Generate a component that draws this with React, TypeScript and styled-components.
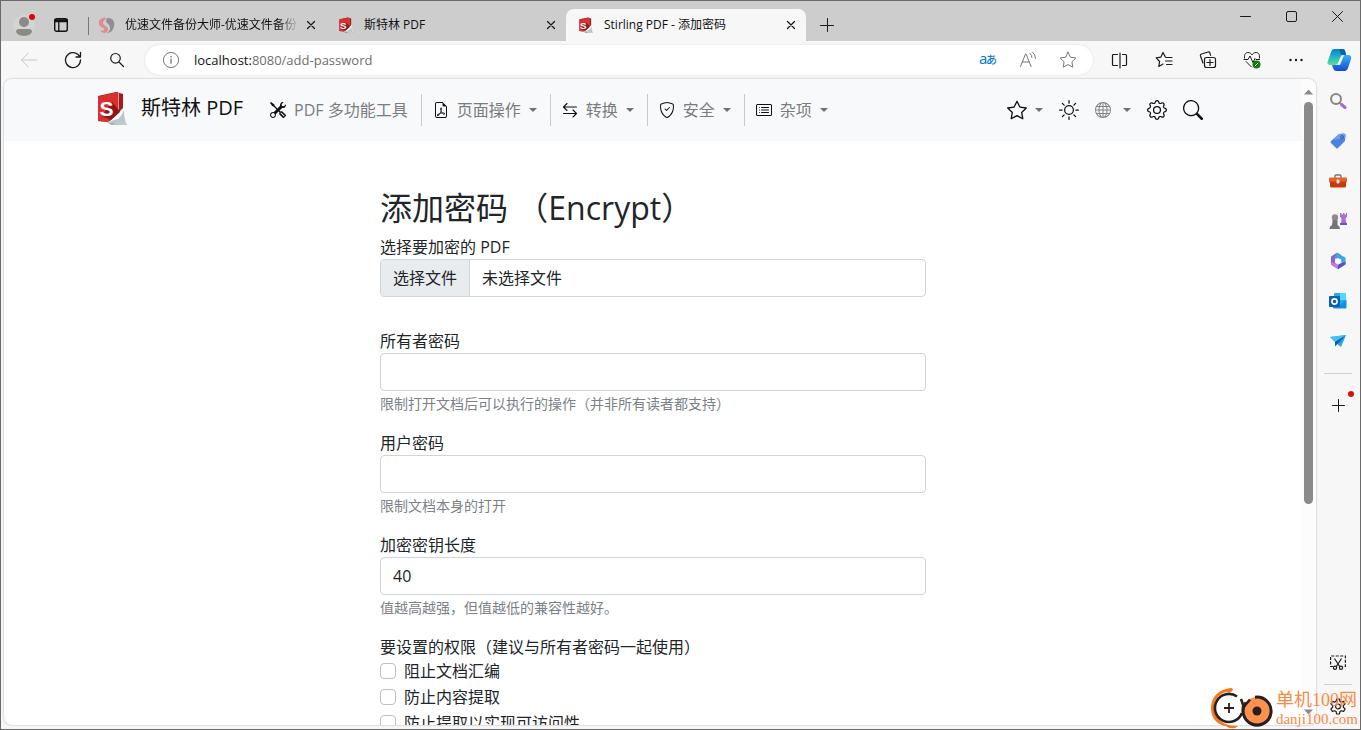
import React from "react";
import styled, { createGlobalStyle } from "styled-components";
import {
  BsTools,
  BsFileEarmarkPdf,
  BsShieldCheck,
  BsCardList,
  BsStar,
  BsSun,
  BsGlobe,
  BsGear,
  BsSearch,
} from "react-icons/bs";

const GlobalStyle = createGlobalStyle`
  *, *::before, *::after { box-sizing: border-box; }
  body {
    margin: 0;
    overflow: hidden;
    font-family: "Open Sans", "Noto Sans CJK SC", sans-serif;
    font-size: 16px;
    line-height: 24px;
    color: #212529;
  }
  button, input { font: inherit; color: inherit; }
  button { padding: 0; border: 0; background: none; }
  svg { display: block; flex: none; }
`;

/* ---------- browser window ---------- */

const Window = styled.div`
  position: relative;
  display: flex;
  flex-direction: column;
  height: 100vh;
  border: 1px solid #6a6a6a;
  background: #f7f7f7;
`;

const TitleBar = styled.header`
  display: flex;
  flex: none;
  height: 40px;
  background: #cdcdcd;
  color: #111;
`;

const ProfileArea = styled.div`
  display: flex;
  align-items: center;
  width: 85px;
  padding: 8px 0 0 11px;
  gap: 17px;
`;

const IconButton = styled.button<{ $w?: number; $h?: number; $color?: string }>`
  display: flex;
  flex: none;
  align-items: center;
  justify-content: center;
  width: ${(p) => p.$w ?? 44}px;
  height: ${(p) => p.$h ?? 38}px;
  color: ${(p) => p.$color ?? "#1b1b1b"};
`;

const Tabs = styled.div`
  display: flex;
  align-items: flex-end;
`;

const Tab = styled.div<{ $active?: boolean }>`
  position: relative;
  display: flex;
  align-items: center;
  width: 240px;
  height: 32px;
  padding: 0 3px 0 12px;
  border-radius: 8px 8px 0 0;
  background: ${(p) => (p.$active ? "#f7f7f7" : "transparent")};
  &:first-child::before {
    content: "";
    position: absolute;
    left: 2px;
    top: 8px;
    width: 1px;
    height: 18px;
    background: #777;
  }
`;

const TabTitle = styled.span<{ $fade?: boolean }>`
  flex: 1;
  min-width: 0;
  margin-left: 10px;
  overflow: hidden;
  white-space: nowrap;
  font-size: 12px;
  line-height: 16px;
  mask-image: ${(p) => (p.$fade ? "linear-gradient(90deg, #000 88%, transparent)" : "none")};
`;

const WindowControls = styled.div`
  display: flex;
  margin-left: auto;
`;

const Toolbar = styled.div`
  display: flex;
  flex: none;
  align-items: center;
  height: 38px;
  padding-left: 6px;
`;

const AddressBar = styled.div`
  display: flex;
  flex: 1;
  align-items: center;
  height: 30px;
  margin: 0 5px 0 6px;
  padding: 0 5px 0 17px;
  border-radius: 15px;
  background: #fff;
  box-shadow: 0 0 2px rgba(0, 0, 0, 0.14);
`;

const Url = styled.a`
  flex: 1;
  margin-left: 14px;
  font-size: 13px;
  line-height: 20px;
  color: #6e6e6e;
  text-decoration: none;
  b {
    font-weight: 400;
    color: #111;
  }
`;

const Body = styled.div`
  display: flex;
  flex: 1;
  min-height: 0;
`;

const Page = styled.div`
  display: flex;
  flex: 1;
  min-width: 0;
  margin: 0 0 4px 3px;
  overflow: hidden;
  border-radius: 8px;
  background: #fff;
  box-shadow: 0 0 2px rgba(0, 0, 0, 0.35);
`;

const Document = styled.div`
  flex: 1;
  min-width: 0;
  overflow: hidden;
`;

const ScrollBar = styled.div`
  display: flex;
  flex: none;
  flex-direction: column;
  align-items: center;
  justify-content: space-between;
  width: 14px;
  padding: 10px 2px 10px 0;
  background: #fcfcfc;
  color: #8a8a8a;
`;

const ScrollTrack = styled.div`
  flex: 1;
  margin: 7px 0;
  width: 9px;
`;

const ScrollThumb = styled.div`
  height: 67%;
  border-radius: 5px;
  background: #8a8a8a;
`;

const SideBar = styled.aside`
  display: flex;
  flex: none;
  flex-direction: column;
  align-items: center;
  width: 44px;
  padding: 2px 0;
`;

const SideRule = styled.hr<{ $tight?: boolean }>`
  width: 28px;
  height: 1px;
  margin: ${(p) => (p.$tight ? "2px 0" : "12px 0 11px")};
  border: 0;
  background: #cfcfcf;
`;

const Spacer = styled.div`
  flex: 1;
`;

const PlusButton = styled(IconButton)`
  position: relative;
  &::after {
    content: "";
    position: absolute;
    top: 6px;
    right: 6px;
    width: 6px;
    height: 6px;
    border-radius: 50%;
    background: #e00b0b;
  }
`;

/* ---------- web page ---------- */

const NavBar = styled.nav`
  height: 62px;
  background: #f8f9fa;
`;

const NavInner = styled.div`
  display: flex;
  align-items: center;
  max-width: 1140px;
  height: 62px;
  margin: 0 auto;
  padding: 0 20px 0 12px;
`;

const Brand = styled.a`
  display: flex;
  align-items: center;
  gap: 12px;
  margin-right: 27px;
  padding-bottom: 4px;
  font-size: 20px;
  line-height: 30px;
  color: #111;
  text-decoration: none;
  white-space: nowrap;
`;

const NavItem = styled.button<{ $divided?: boolean }>`
  display: flex;
  align-items: center;
  height: 32px;
  padding: 0 13px 0 ${(p) => (p.$divided ? 11 : 0)}px;
  border-left: ${(p) => (p.$divided ? "1px solid #c8c9ca" : "0")};
  color: #7b7c7d;
  white-space: nowrap;
  span {
    margin-left: 8px;
  }
  svg {
    color: #111;
  }
`;

const Caret = styled.i`
  flex: none;
  margin-left: 8px;
  border: 4px solid transparent;
  border-top: 4px solid #6f7072;
  border-bottom: 0;
`;

const NavTools = styled.div`
  display: flex;
  align-items: center;
  gap: 16px;
  margin-left: auto;
`;

const ToolButton = styled.button<{ $muted?: boolean }>`
  display: flex;
  align-items: center;
  color: ${(p) => (p.$muted ? "#808182" : "#111")};
`;

const Form = styled.form`
  max-width: 570px;
  margin: 0 auto;
  padding: 48px 12px 0;
`;

const Heading = styled.h2`
  margin: 0 0 8px;
  font-size: 32px;
  line-height: 38px;
  font-weight: 400;
`;

const Field = styled.div<{ $gap?: number }>`
  margin-bottom: ${(p) => p.$gap ?? 14}px;
`;

const Label = styled.label`
  display: block;
`;

const TextInput = styled.input`
  display: block;
  width: 100%;
  height: 38px;
  padding: 6px 12px;
  border: 1px solid #ced4da;
  border-radius: 4px;
  background: #fff;
`;

const Help = styled.small`
  display: block;
  font-size: 14px;
  line-height: 26px;
  color: #7b8187;
`;

const FileBox = styled.label`
  display: flex;
  height: 38px;
  overflow: hidden;
  border: 1px solid #ced4da;
  border-radius: 4px;
  line-height: 36px;
  span:first-of-type {
    padding: 0 12px;
    border-right: 1px solid #ced4da;
    background: #e9ecef;
  }
  span:last-of-type {
    padding: 0 12px;
  }
`;

const HiddenFile = styled.input`
  width: 0;
  height: 36px;
  opacity: 0;
`;

const CheckRow = styled.label`
  display: flex;
  align-items: center;
  height: 24px;
  margin-bottom: 2px;
`;

const CheckBox = styled.input`
  appearance: none;
  width: 16px;
  height: 16px;
  margin: 0 8px 0 0;
  border: 1px solid #bfbfbf;
  border-radius: 4px;
  background: #fff;
`;

const WaterMark = styled.div`
  position: absolute;
  right: 2px;
  bottom: 0;
  display: flex;
  align-items: center;
  gap: 2px;
  font-family: "Liberation Serif", "Noto Sans CJK SC", serif;
  color: #f98a45;
  pointer-events: none;
`;

const MarkText = styled.div`
  display: flex;
  flex-direction: column;
  padding-top: 2px;
  font-size: 18px;
  line-height: 20px;
  white-space: nowrap;
  span:last-child {
    font-size: 15px;
    line-height: 18px;
  }
`;

/* ---------- drawings ---------- */

type LineProps = { size: number; d: string; box?: number; w?: number };
const Line = ({ size, d, box = size, w = 1 }: LineProps) => (
  <svg width={size} height={size} viewBox={`0 0 ${box} ${box}`} fill="none" stroke="currentColor" strokeWidth={w} strokeLinecap="round" strokeLinejoin="round">
    <path d={d} />
  </svg>
);

const CLOSE = "M1.5 1.5l7 7M8.5 1.5l-7 7";
const STAR = "M9 1.2l2.4 5 5.4.8-3.9 3.8.9 5.4L9 13.6l-4.8 2.6.9-5.4L1.2 7l5.4-.8z";
const GEAR =
  "M7.6 1h2.8l.5 2.3 1.5.8 2.2-.7 1.5 2.5-1.8 1.6v1.8l1.8 1.6-1.5 2.6-2.2-.8-1.5.9-.5 2.4H7.6l-.5-2.4-1.5-.9-2.2.8-1.5-2.6 1.8-1.6V7.5L1.9 5.9l1.5-2.5 2.2.7 1.5-.8zM9 6a2.4 2.4 0 1 1 0 4.8A2.4 2.4 0 0 1 9 6";

const Logo = ({ size }: { size: number }) => (
  <svg width={size} height={size} viewBox="0 0 34 34">
    <path d="M12 31l20 1.500v.9l-16 .4z" fill="#7d9396" opacity=".8" />
    <path d="M3 5L21 1l7 2v14L14 31 3 30z" fill="#a01c22" />
    <path d="M3 5.500L23 1v17L13 31l-10-1z" fill="#d8302f" />
    <path d="M17 11l6 7 2 3-9 8-9-4z" fill="#8d151b" />
    <path d="M23 1l1 1v16l-1 1z" fill="#f08b86" />
    <path d="M29.500 14c-1 8-6 13-17 17l8 1.500c5 .7 8 .5 11 0-2-5-2-12-2-18.500z" fill="#eef3f3" />
    <path d="M29 19c-3 6-8 10-16 12l7 1.500c5 .7 8 .5 11 0-1.500-4-2-9-2-13.500z" fill="#b9c9cb" />
    <path d="M29 17c-3 5-6 8-12 12l6-1c3-3 5-6 6-11z" fill="#fff" />
    <text x="4.500" y="25" fontFamily="Liberation Sans" fontWeight="700" fontSize="21" fill="#fff">S</text>
  </svg>
);

const SwirlIcon = () => (
  <svg width="17" height="17" viewBox="0 0 17 17">
    <path d="M9 1C4 0 0 3 1 7c0 3 4 3 5 5 0 2-2 2-4 1 2 4 7 4 8 0 1-4-5-4-5-7 0-2 2-4 4-5z" fill="#df8c90" />
    <path d="M10 1c5 0 7 4 6 8-1 5-4 7-7 7 3-2 4-5 2-8-1-2-3-2-3-4 0-1 1-3 2-3z" fill="#8f8f8f" />
  </svg>
);

const Avatar = () => (
  <svg width="24" height="26" viewBox="0 0 24 26">
    <circle cx="12" cy="14" r="11" fill="#d6d4d1" />
    <circle cx="12" cy="10" r="5" fill="#8c8a87" />
    <path d="M4 20q0-3 3-3h10q3 0 3 3-2 4-8 4t-8-4z" fill="#8c8a87" />
    <circle cx="20" cy="5" r="3" fill="#e3000f" />
  </svg>
);

const TabMenuIcon = () => (
  <svg width="16" height="16" viewBox="0 0 16 16" fill="none" stroke="#111" strokeWidth="1.4">
    <rect x="1.7" y="1.7" width="12.6" height="12.6" rx="2" />
    <path d="M2 3.7h12M5.8 5v9" strokeWidth="1.3" />
    <path d="M2 3h12v1.6H2z" fill="#111" />
  </svg>
);

const CopilotIcon = () => (
  <svg width="25" height="24" viewBox="0 0 25 24">
    <defs>
      <linearGradient id="cpA" x1="0" y1="0" x2="0" y2="1">
        <stop offset="0" stopColor="#0f7fc0" />
        <stop offset=".5" stopColor="#1fb5cf" />
        <stop offset="1" stopColor="#62dd8c" />
      </linearGradient>
      <linearGradient id="cpB" x1="0" y1="0" x2="0" y2="1">
        <stop offset="0" stopColor="#33b5f5" />
        <stop offset="1" stopColor="#1747d8" />
      </linearGradient>
    </defs>
    <path d="M18 7h3q4 0 3 4l-3 9q-1 3-3 3H9q-2 0-3-3l-1-3h5q2 0 3-3l2-5q1-2 3-2z" fill="url(#cpB)" />
    <path d="M7 1h9q2 0 2.500 3l.5 3h-3q-2 0-3 3l-2 5q-1 2-3 2H3q-3 0-2.500-3L4 4q1-3 3-3z" fill="url(#cpA)" />
    <path d="M14 9q1-2 3-2l-4 10h-3q1.500-.5 2-2z" fill="#f7f7f7" />
    <path d="M12 1h4q2 0 3 6h-4q-2-1-2-4z" fill="#0b63ad" />
  </svg>
);

const ReadAloudIcon = () => (
  <svg width="18" height="18" viewBox="0 0 18 18" fill="none" stroke="#777" strokeLinecap="round" strokeLinejoin="round">
    <path d="M1.500 15.500L6.500 3h.6l5 12.500M3.500 11h6.800M11 2.500q2 1.500 2 4M13.500 1q3 2.500 3 6.500" />
  </svg>
);

const TranslateIcon = () => (
  <svg width="20" height="20" viewBox="0 0 20 20" fill="#0f78cf">
    <text x="1" y="14" fontFamily="Noto Sans" fontSize="15">a</text>
    <text x="8" y="14" fontFamily="Noto Sans CJK JP" fontWeight="500" fontSize="11">あ</text>
  </svg>
);

const InfoIcon = () => (
  <svg width="18" height="18" viewBox="0 0 18 18" fill="none" stroke="#777">
    <circle cx="9" cy="9" r="7.600" />
    <path d="M9 7.800v5M9 5v1.400" strokeWidth="1.300" />
  </svg>
);

const HealthIcon = () => (
  <svg width="18" height="18" viewBox="0 0 18 18" fill="none" stroke="#1b1b1b" strokeLinecap="round" strokeLinejoin="round">
    <path d="M1.500 7C1 3 3 1.500 5 1.500S8.500 3 9 4c.5-1 2-2.500 4-2.500S17 3 16.500 7M3 10.500L8.500 16M1 8.500h4L7 5l3 6.500 2-4 1 1h3.500" />
    <circle cx="13.500" cy="13.500" r="4" fill="#107c10" stroke="none" />
    <path d="M12.200 14.800l2.600-2.600" stroke="#fff" />
  </svg>
);

const ConvertIcon = () => <Line size={16} w={1.1} d="M14.500 5H1.500M5 1.500L1.500 5 5 8.500M1.500 11.500h13M11 8l3.500 3.500L11 15" />;

const SideSearch = () => (
  <svg width="18" height="18" viewBox="0 0 18 18" fill="none">
    <circle cx="7" cy="7" r="5" stroke="#858585" strokeWidth="2" />
    <path d="M11 11l1.500 1.500" stroke="#858585" strokeWidth="2" />
    <path d="M12.500 12.500l3.500 3" stroke="#a569d4" strokeWidth="3" strokeLinecap="round" />
  </svg>
);

const SideTag = () => (
  <svg width="18" height="18" viewBox="0 0 18 18">
    <path d="M10 2l5-.5q1.500 0 1.500 1.500L16 9 9 16q-1 1-2 0L2 11q-1-1 0-2z" fill="#4a83e0" />
    <path d="M10 2l5-.5q1.500 0 1.500 1.500l-.3 3L4 8z" fill="#6ba0ee" />
    <circle cx="13" cy="5" r="1.700" fill="#1d3b86" />
    <circle cx="13" cy="5" r=".7" fill="#dfe9ff" />
  </svg>
);

const SideTools = () => (
  <svg width="18" height="18" viewBox="0 0 18 18">
    <path d="M6 6V4q0-1 1-1h4q1 0 1 1v2" fill="none" stroke="#777" strokeWidth="1.400" />
    <rect x="0" y="5.500" width="18" height="5" rx="1" fill="#e8622a" />
    <path d="M1 9.500h16V14q0 1.500-1.500 1.500h-13Q1 15.500 1 14z" fill="#c43b0e" />
    <rect x="7.500" y="7.500" width="3" height="4" rx="1" fill="#ddd" />
  </svg>
);

const SideGames = () => (
  <svg width="18" height="18" viewBox="0 0 18 18">
    <path d="M11 1h1.500v1.500H14V1h1.500v1.500H17V1h1v4l-1.500 1 .8 6H12l.5-6L11 5z" fill="#a76fd6" />
    <path d="M11 11h7v2h-7z" fill="#7f4ab8" />
    <circle cx="6" cy="5.500" r="3.200" fill="#8d8d8d" />
    <path d="M3.500 8h5v1.500L8.500 13q2.500 1 2.500 4H.5q0-3 2.500-4l.5-3.500z" fill="#757575" />
  </svg>
);

const SideOffice = () => (
  <svg width="18" height="18" viewBox="0 0 18 18">
    <path d="M8 .8L2 4.500v8l4 2.300V6.500L12 3z" fill="#8c5fd6" />
    <path d="M8 .8l8.500 5v6.700l-4.300-2.300V7.500L6 6.500V5z" fill="#3aa5e0" />
    <path d="M2 11.500l7 5.700 7.500-4.700v-2.500L12 11l-3 1.800-3-2z" fill="#5a4fbf" />
    <path d="M1.500 10l5 1 2.500 2v4.200l-6.500-4z" fill="#c17ce0" />
    <path d="M9 6l3 1.500v3.200L9 12.500l-3-1.800V7.500z" fill="#f7f7f7" />
  </svg>
);

const SideOutlook = () => (
  <svg width="18" height="18" viewBox="0 0 18 18">
    <rect x="5" y="1" width="12" height="14" rx="1" fill="#28a8ea" />
    <path d="M11 1h5q1 0 1 1v6h-6z" fill="#50d9ff" />
    <path d="M4 16V9l7 4 6.500-5v7.500q0 1-1 1H5z" fill="#1490df" />
    <rect x="0" y="4" width="11" height="11" rx="1" fill="#0a5fb4" />
    <circle cx="5.500" cy="9.500" r="2.600" fill="none" stroke="#fff" strokeWidth="1.600" />
  </svg>
);

const SideSend = () => (
  <svg width="18" height="18" viewBox="0 0 18 18">
    <path d="M1 5l16-2-5 12-5-4z" fill="#2aa5e2" />
    <path d="M17 3L6 10v4.500l2.500-2.500z" fill="#0b5fa5" />
    <path d="M1 5l16-2L6 9.500z" fill="#45c0f0" />
  </svg>
);

const CaptureIcon = () => (
  <svg width="18" height="18" viewBox="0 0 18 18" fill="none" stroke="#1b1b1b" strokeWidth="1.200">
    <path d="M4 13.500H1.600V3h14.800v10.500H14" strokeDasharray="3 1.500" />
    <path d="M5.500 5.500L11 14M12.500 5.500L7 14" />
    <circle cx="6" cy="14.800" r="1.600" />
    <circle cx="12" cy="14.800" r="1.600" />
  </svg>
);

const MarkLogo = () => (
  <svg width="64" height="42" viewBox="0 0 64 42" fill="none">
    <path d="M21 1C9 2 1 10 1 21s7 17 15 18q3 3 9 2l3-2C14 39 5 33 4 21 4 12 10 6 17 5q4 1 6-2 0-2-2-2z" fill="#f5781e" />
    <circle cx="19" cy="21" r="14" fill="#fff" />
    <path d="M27 9.500A14 14 0 1 0 32 26M33 19v6" stroke="#272020" strokeWidth="2.600" />
    <path d="M14 21h10M19 16v10" stroke="#272020" strokeWidth="1.800" />
    <circle cx="47" cy="24" r="14" fill="#fd904e" />
    <path d="M45 10.200A14 14 0 1 1 36 15.500" stroke="#272020" strokeWidth="3" />
    <path d="M31 12l2.500 7M40 12.500l-6 7" stroke="#272020" strokeWidth="2.600" />
    <circle cx="47" cy="24" r="4.500" fill="#272020" />
  </svg>
);

const ScrollArrow = ({ down }: { down?: boolean }) => (
  <svg width="9" height="6" viewBox="0 0 9 6" fill="currentColor">
    <path d={down ? "M0 .5h9L4.500 5.500z" : "M0 5.500h9L4.500.5z"} />
  </svg>
);

/* ---------- data ---------- */

const tabs = [
  { title: "优速文件备份大师-优速文件备份", icon: <SwirlIcon />, fade: true },
  { title: "斯特林 PDF", icon: <Logo size={16} /> },
  { title: "Stirling PDF - 添加密码", icon: <Logo size={16} />, active: true },
];

const menus = [
  { label: "页面操作", icon: <BsFileEarmarkPdf size={16} /> },
  { label: "转换", icon: <ConvertIcon /> },
  { label: "安全", icon: <BsShieldCheck size={16} /> },
  { label: "杂项", icon: <BsCardList size={16} /> },
];

const fields = [
  { id: "owner", label: "所有者密码", type: "password", value: "", help: "限制打开文档后可以执行的操作（并非所有读者都支持）" },
  { id: "user", label: "用户密码", type: "password", value: "", help: "限制文档本身的打开" },
  { id: "keyLength", label: "加密密钥长度", type: "text", value: "40", help: "值越高越强，但值越低的兼容性越好。" },
];

const permissions = ["阻止文档汇编", "防止内容提取", "防止提取以实现可访问性"];

const sideApps = [
  { name: "Search", icon: <SideSearch /> },
  { name: "Shopping", icon: <SideTag /> },
  { name: "Tools", icon: <SideTools /> },
  { name: "Games", icon: <SideGames /> },
  { name: "Microsoft 365", icon: <SideOffice /> },
  { name: "Outlook", icon: <SideOutlook /> },
  { name: "Drop", icon: <SideSend /> },
];

export default function App() {
  return (
    <Window>
      <GlobalStyle />
      <TitleBar>
        <ProfileArea>
          <IconButton $w={24} $h={26} aria-label="Profile"><Avatar /></IconButton>
          <IconButton $w={16} $h={26} aria-label="Tab actions"><TabMenuIcon /></IconButton>
        </ProfileArea>
        <Tabs>
          {tabs.map((t) => (
            <Tab key={t.title} $active={t.active}>
              {t.icon}
              <TabTitle $fade={t.fade}>{t.title}</TabTitle>
              <IconButton $w={24} $h={24} aria-label="Close tab"><Line size={10} w={1.3} d={CLOSE} /></IconButton>
            </Tab>
          ))}
          <IconButton $w={42} $h={32} aria-label="New tab"><Line size={14} d="M.5 7.500h13M7.500.5v13" /></IconButton>
        </Tabs>
        <WindowControls>
          <IconButton $w={46} $h={30} aria-label="Minimize"><Line size={11} d="M.5 5.500h10" /></IconButton>
          <IconButton $w={46} $h={30} aria-label="Maximize"><Line size={11} d="M2 .5h7q1.500 0 1.500 1.500v7q0 1.500-1.500 1.500H2Q.5 10.500.5 9V2Q.5.5 2 .5z" /></IconButton>
          <IconButton $w={46} $h={30} aria-label="Close"><Line size={11} d="M.5.5l10 10M10.500.5l-10 10" /></IconButton>
        </WindowControls>
      </TitleBar>

      <Toolbar>
        <IconButton $color="#c9c9c9" aria-label="Back"><Line size={18} d="M17 9H1.500M8 2L1.500 9 8 16" /></IconButton>
        <IconButton aria-label="Refresh"><Line size={18} w={1.3} d="M16.500 9A7.500 7.500 0 1 1 14 3.500L16.300 6M16.500 1.500V6H12" /></IconButton>
        <IconButton aria-label="Search"><Line size={16} w={1.2} d="M6.500 1.500a4.800 4.800 0 1 1 0 9.600 4.800 4.800 0 0 1 0-9.600M10 10l4.500 4.500" /></IconButton>
        <AddressBar>
          <InfoIcon />
          <Url href="http://localhost:8080/add-password"><b>localhost:</b>8080/add-password</Url>
          <IconButton $w={40} $h={30} aria-label="Translate"><TranslateIcon /></IconButton>
          <IconButton $w={40} $h={30} aria-label="Read aloud"><ReadAloudIcon /></IconButton>
          <IconButton $w={40} $h={30} $color="#777" aria-label="Favorite"><Line size={18} d={STAR} /></IconButton>
        </AddressBar>
        <IconButton aria-label="Split screen"><Line size={18} w={1.2} d="M6.500 3.500h-4q-1 0-1 1v9q0 1 1 1h4M11.500 3.500h3q1 0 1 1v9q0 1-1 1h-3M9 2v15" /></IconButton>
        <IconButton aria-label="Favorites"><Line size={18} w={1.2} d="M10.500 6.200L8 1.500 5.800 6.200l-4.600.7 3.400 3.600-.8 5L8 13M11.500 6.500H17M10.500 10H17M11.500 13.500H17" /></IconButton>
        <IconButton aria-label="Collections"><Line size={18} w={1.2} d="M4 12L1.500 5q-.4-1.500 1-2L9 1q1.500-.4 2 1l.5 2.500M7.500 6.500h7q2 0 2 2v6q0 2-2 2h-7q-2 0-2-2v-6q0-2 2-2zM11 8.500v6M8 11.500h6" /></IconButton>
        <IconButton aria-label="Browser essentials"><HealthIcon /></IconButton>
        <IconButton aria-label="More"><Line size={16} w={2.4} d="M2.500 8h.01M8 8h.01M13.500 8h.01" /></IconButton>
        <IconButton $w={42} aria-label="Copilot"><CopilotIcon /></IconButton>
      </Toolbar>

      <Body>
        <Page>
          <Document>
            <NavBar>
              <NavInner>
                <Brand href="#"><Logo size={34} /><span>斯特林 PDF</span></Brand>
                <NavItem><BsTools size={16} /><span>PDF 多功能工具</span></NavItem>
                {menus.map((m) => (
                  <NavItem key={m.label} $divided>
                    {m.icon}
                    <span>{m.label}</span>
                    <Caret />
                  </NavItem>
                ))}
                <NavTools>
                  <ToolButton aria-label="Favourites"><BsStar size={20} /><Caret /></ToolButton>
                  <ToolButton aria-label="Theme"><BsSun size={20} /></ToolButton>
                  <ToolButton $muted aria-label="Language"><BsGlobe size={16} />&nbsp;<Caret /></ToolButton>
                  <ToolButton aria-label="Settings"><BsGear size={20} /></ToolButton>
                  <ToolButton aria-label="Search tools"><BsSearch size={20} /></ToolButton>
                </NavTools>
              </NavInner>
            </NavBar>
            <Form>
              <Heading>添加密码 （Encrypt）</Heading>
              <Field $gap={32}>
                <Label htmlFor="pdf">选择要加密的 PDF</Label>
                <FileBox>
                  <span>选择文件</span>
                  <span>未选择文件</span>
                  <HiddenFile id="pdf" type="file" accept="application/pdf" />
                </FileBox>
              </Field>
              {fields.map((f) => (
                <Field key={f.id}>
                  <Label htmlFor={f.id}>{f.label}</Label>
                  <TextInput id={f.id} type={f.type} defaultValue={f.value} />
                  <Help>{f.help}</Help>
                </Field>
              ))}
              <div>要设置的权限（建议与所有者密码一起使用）</div>
              {permissions.map((p) => (
                <CheckRow key={p}><CheckBox type="checkbox" />{p}</CheckRow>
              ))}
            </Form>
          </Document>
          <ScrollBar aria-hidden="true">
            <ScrollArrow />
            <ScrollTrack><ScrollThumb /></ScrollTrack>
            <ScrollArrow down />
          </ScrollBar>
        </Page>
        <SideBar>
          {sideApps.map((a) => (
            <IconButton key={a.name} $h={40} aria-label={a.name}>{a.icon}</IconButton>
          ))}
          <SideRule />
          <PlusButton $h={40} aria-label="Customize"><Line size={13} d="M.5 6.500h12M6.500.5v12" /></PlusButton>
          <Spacer />
          <IconButton $h={40} aria-label="Screenshot"><CaptureIcon /></IconButton>
          <SideRule $tight />
          <IconButton $h={40} aria-label="Sidebar settings"><Line size={18} w={1.2} d={GEAR} /></IconButton>
        </SideBar>
      </Body>

      <WaterMark>
        <MarkLogo />
        <MarkText><span>单机100网</span><span>danji100.com</span></MarkText>
      </WaterMark>
    </Window>
  );
}
